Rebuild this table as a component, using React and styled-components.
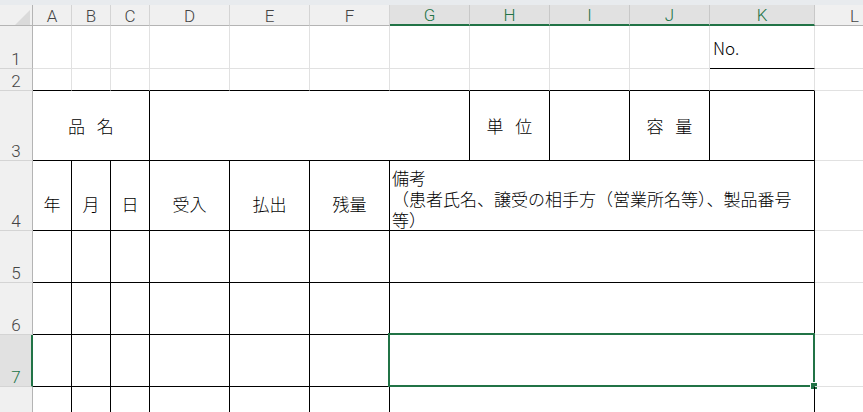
import React from 'react'
import styled, { createGlobalStyle } from 'styled-components'

const GREEN = '#217346'
const GRID = '#e1e1e1'
const INK = '#000'

const GlobalStyle = createGlobalStyle`
  html, body {
    margin: 0;
    padding: 0;
    background: #fff;
    overflow: hidden;
  }
`

const TopStrip = styled.div`
  height: 5px;
  background: #e8ebee;
`

const Sheet = styled.div`
  display: grid;
  grid-template-columns: 33px 39px 39px 39px 80px 80px 80px 80px 80px 80px 80px 105px 80px;
  grid-template-rows: 21px 43px 22px 70px 70px 52px 52px 52px 26px;
  overflow: hidden;
  font-family: 'Noto Sans CJK JP', 'Liberation Sans', sans-serif;
  font-weight: 300;
`

const Corner = styled.div`
  position: relative;
  background: #f0f0f0;
  border-right: 1px solid #b4b4b4;
  border-bottom: 1px solid #b4b4b4;

  svg {
    position: absolute;
    left: 15px;
    top: 5px;
  }
`

const ColHead = styled.div`
  box-sizing: border-box;
  display: flex;
  align-items: center;
  justify-content: center;
  background: ${p => (p.$sel ? '#e1e1e1' : '#f0f0f0')};
  color: ${p => (p.$sel ? GREEN : '#444')};
  border-right: 1px solid ${p => (p.$sel ? '#c8c8c8' : '#d4d4d4')};
  border-bottom: ${p => (p.$sel ? `2px solid ${GREEN}` : '1px solid #b4b4b4')};
  font-family: Roboto, 'Liberation Sans', sans-serif;
  font-weight: 300;
  font-size: 17px;
  padding-top: 1px;
`

const RowHead = styled.div`
  box-sizing: border-box;
  display: flex;
  align-items: flex-end;
  justify-content: center;
  background: ${p => (p.$sel ? '#e1e1e1' : '#f0f0f0')};
  color: ${p => (p.$sel ? GREEN : '#444')};
  border-right: ${p => (p.$sel ? `2px solid ${GREEN}` : '1px solid #b4b4b4')};
  border-bottom: 1px solid #d4d4d4;
  font-family: Roboto, 'Liberation Sans', sans-serif;
  font-weight: 300;
  font-size: 17px;
  line-height: 17px;
  padding-left: ${p => (p.$sel ? '1px' : '0')};
`

const Cell = styled.div`
  box-sizing: border-box;
  position: relative;
  grid-column: span ${p => p.$span || 1};
  display: flex;
  flex-direction: column;
  justify-content: ${p => p.$v || 'center'};
  align-items: ${p => p.$h || 'center'};
  border-right: 1px solid ${p => p.$r || GRID};
  border-bottom: 1px solid ${p => p.$b || GRID};
  padding: ${p => p.$pad || '0'};
  font-size: 17px;
  line-height: 21px;
  color: #000;
  white-space: nowrap;
`

const Label = styled.span`
  word-spacing: 8px;
`

const Note = styled.div`
  align-self: stretch;
  white-space: normal;
  line-break: strict;
  line-height: 21px;
`

const Selection = styled.div`
  position: absolute;
  left: -2px;
  top: -2px;
  right: -1px;
  bottom: -1px;
  border: 2px solid ${GREEN};
  pointer-events: none;
`

const Handle = styled.div`
  position: absolute;
  right: -4px;
  bottom: -4px;
  width: 6px;
  height: 6px;
  background: ${GREEN};
  border-left: 1px solid #fff;
  border-top: 1px solid #fff;
`

const cols = ['A', 'B', 'C', 'D', 'E', 'F', 'G', 'H', 'I', 'J', 'K', 'L']
const selCols = ['G', 'H', 'I', 'J', 'K']

const Plain = ({ n, b }) =>
  Array.from({ length: n }, (_, i) => <Cell key={i} $b={b} />)

const TableRow = ({ children }) => (
  <>
    <Cell $r={INK} $b={INK} />
    <Cell $r={INK} $b={INK} />
    <Cell $r={INK} $b={INK} />
    <Cell $r={INK} $b={INK} />
    <Cell $r={INK} $b={INK} />
    <Cell $r={INK} $b={INK} />
    <Cell $span={5} $r={INK} $b={INK}>
      {children}
    </Cell>
    <Cell />
  </>
)

export default function App() {
  return (
    <>
      <GlobalStyle />
      <TopStrip />
      <Sheet>
        <Corner>
          <svg width="15" height="15" viewBox="0 0 15 15">
            <path d="M15 0 L15 15 L0 15 Z" fill="#dadada" />
          </svg>
        </Corner>
        {cols.map(c => (
          <ColHead key={c} $sel={selCols.includes(c)}>
            {c}
          </ColHead>
        ))}

        {/* row 1 */}
        <RowHead>1</RowHead>
        <Plain n={10} />
        <Cell $b={INK} $h="flex-start" $pad="0 0 0 3px">
          No.
        </Cell>
        <Cell />

        {/* row 2 */}
        <RowHead>2</RowHead>
        <Plain n={11} b={INK} />
        <Cell />

        {/* row 3 */}
        <RowHead>3</RowHead>
        <Cell $span={3} $r={INK} $b={INK}>
          <Label>品 名</Label>
        </Cell>
        <Cell $span={4} $r={INK} $b={INK} />
        <Cell $r={INK} $b={INK}>
          <Label>単 位</Label>
        </Cell>
        <Cell $r={INK} $b={INK} />
        <Cell $r={INK} $b={INK}>
          <Label>容 量</Label>
        </Cell>
        <Cell $r={INK} $b={INK} />
        <Cell />

        {/* row 4 */}
        <RowHead>4</RowHead>
        {['年', '月', '日', '受入', '払出', '残量'].map(t => (
          <Cell key={t} $r={INK} $b={INK} $v="flex-end" $pad="0 0 16px 0">
            {t}
          </Cell>
        ))}
        <Cell $span={5} $r={INK} $b={INK} $v="flex-end" $h="flex-start" $pad="0 0 0 2px">
          <Note>
            備考
            <br />
            （患者氏名、譲受の相手方（営業所名等）、製品番号等）
          </Note>
        </Cell>
        <Cell />

        {/* rows 5 - 8 (row 8 runs past the window edge) */}
        <RowHead>5</RowHead>
        <TableRow />
        <RowHead>6</RowHead>
        <TableRow />
        <RowHead $sel>7</RowHead>
        <TableRow>
          <Selection>
            <Handle />
          </Selection>
        </TableRow>
        <RowHead />
        <TableRow />
      </Sheet>
    </>
  )
}
